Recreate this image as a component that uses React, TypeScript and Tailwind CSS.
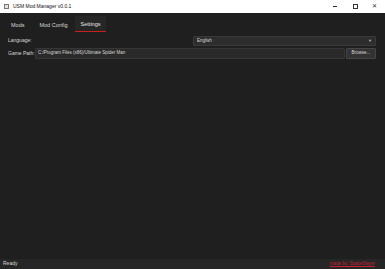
import React from "react";

export default function App() {
  return (
    <div
      className="w-[385px] h-[269px] flex flex-col bg-[#1f1f1f] overflow-hidden text-[5px] text-[#d8d8d8]"
      style={{ fontFamily: '"Liberation Sans", Arial, sans-serif' }}
    >
      {/* Title bar */}
      <div className="h-[13px] bg-white flex items-center text-[#111] shrink-0">
        <div className="w-[5px] h-[5px] ml-[4px] border border-[#777] bg-[#e4e4e4]" />
        <span className="ml-[4px] text-[5px]">USM Mod Manager v0.0.1</span>
        <div className="ml-auto flex items-center h-full mr-[2px]">
          <div className="w-[20px] h-full flex items-center justify-center">
            <div className="w-[4px] h-px bg-[#333]" />
          </div>
          <div className="w-[20px] h-full flex items-center justify-center">
            <div className="w-[5px] h-[5px] border border-[#333]" />
          </div>
          <div className="w-[18px] h-full flex items-center justify-center text-[6px] text-[#333]">✕</div>
        </div>
      </div>

      {/* Tabs */}
      <div className="h-[19px] flex items-end pl-[5px] shrink-0 text-[5.5px]">
        <div className="h-[16px] px-[6px] flex items-center pt-[2px]">Mods</div>
        <div className="h-[16px] px-[6px] ml-[3px] flex items-center pt-[2px]">Mod Config</div>
        <div className="h-[16px] px-[6px] ml-[1px] flex items-center pt-[2px] bg-[#262626] border-b border-[#c81e1e] text-[#e8e8e8]">
          Settings
        </div>
      </div>

      {/* Content */}
      <div className="flex flex-col gap-[2px] pl-[8px] pr-[9px] pt-[4px]">
        <div className="flex items-center h-[10px]">
          <span>Language:</span>
          <div className="ml-auto w-[183px] h-[10px] bg-[#2d2d2d] border border-[#3a3a3a] rounded-[1px] flex items-center px-[3px]">
            <span className="text-[4.5px]">English</span>
            <span className="ml-auto text-[4px] text-[#bbb]">▼</span>
          </div>
        </div>
        <div className="flex items-center h-[11px]">
          <span className="w-[27px] shrink-0">Game Path:</span>
          <div className="flex-1 h-[11px] bg-[#2a2a2a] border border-[#363636] rounded-[1px] flex items-center px-[2px]">
            <span className="text-[4.5px]">C:/Program Files (x86)/Ultimate Spider Man</span>
          </div>
          <div className="ml-[1px] w-[30px] h-[11px] bg-[#333333] border border-[#454545] rounded-[1px] flex items-center justify-center text-[4.5px]">
            Browse...
          </div>
        </div>
      </div>

      <div className="flex-1" />

      {/* Status bar */}
      <div className="h-[10px] bg-[#262626] flex items-center px-[3px] shrink-0">
        <span>Ready</span>
        <span className="ml-auto mr-[7px] text-[4.5px] text-[#c42032] underline">made by: SpaceSlayer</span>
      </div>
    </div>
  );
}
